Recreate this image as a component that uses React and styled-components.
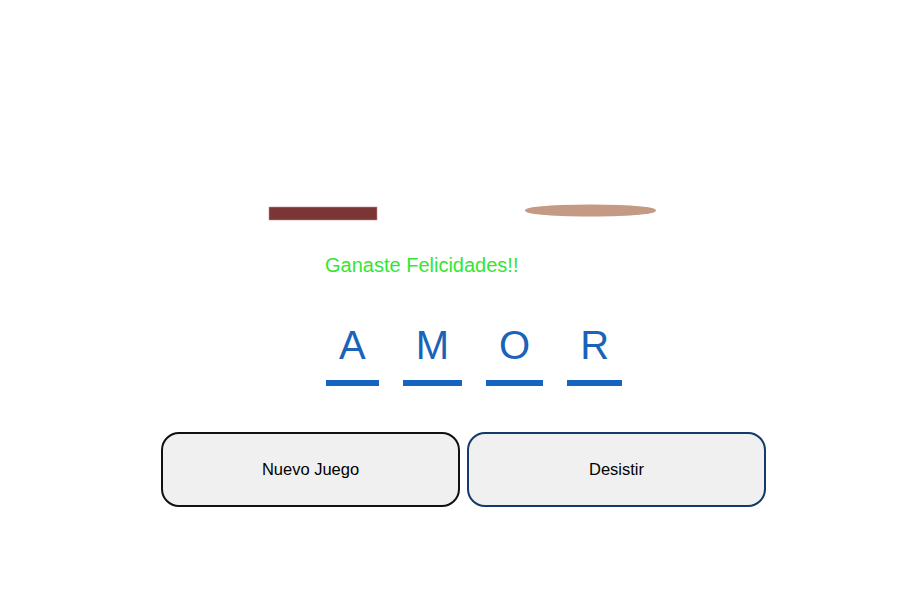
import styled, { createGlobalStyle } from 'styled-components';

const GlobalStyle = createGlobalStyle`
    body {
        margin: 0;
        background: #ffffff;
        font-family: "Liberation Sans", Arial, sans-serif;
    }
`

const Page = styled.div`
    width: 918px;
    height: 590px;
    display: flex;
    flex-direction: column;
`

const Stage = styled.svg`
    display: block;
    width: 918px;
    height: 253px;
`

const Board = styled.div`
    display: flex;
    flex-direction: column;
    padding-left: 161px;
`

const Message = styled.p`
    margin: 1px 0 45px 164px;
    font-size: 20px;
    color: #33e633;
`

const Word = styled.div`
    display: flex;
    gap: 24px;
    margin-left: 165px;
    margin-bottom: 46px;
`

const Letter = styled.span`
    font-size: 40px;
    line-height: 46px;
    color: #1a63b8;
    padding: 0 13px 12px;
    border-bottom: 6px solid #1565c0;
`

const Actions = styled.div`
    display: flex;
    gap: 7px;
`

const Button = styled.button`
    width: 299px;
    height: 75px;
    background: #f0f0f0;
    border: 2px solid ${props => props.$border};
    border-radius: 18px;
    font-family: "Liberation Sans", Arial, sans-serif;
    font-size: 16.5px;
    color: #000;
    cursor: pointer;
`

const word = ['A', 'M', 'O', 'R']

function App() {
    return (
        <Page>
            <GlobalStyle />
            <Stage viewBox="0 0 918 253">
                <rect x="269" y="207" width="108" height="13" fill="#7b3535" stroke="#c98a8a" strokeWidth="0.6" />
                <path d="M525 210.5 Q525 205 590.5 204.5 Q656 205 656 210.5 Q656 216 590.5 216.5 Q525 216 525 210.5 Z" fill="#c59a84" />
            </Stage>
            <Board>
                <Message>Ganaste Felicidades!!</Message>
                <Word>
                    {word.map((l, i) => <Letter key={i}>{l}</Letter>)}
                </Word>
                <Actions>
                    <Button $border="#111111">Nuevo Juego</Button>
                    <Button $border="#123a6b">Desistir</Button>
                </Actions>
            </Board>
        </Page>
    )
}

export default App
